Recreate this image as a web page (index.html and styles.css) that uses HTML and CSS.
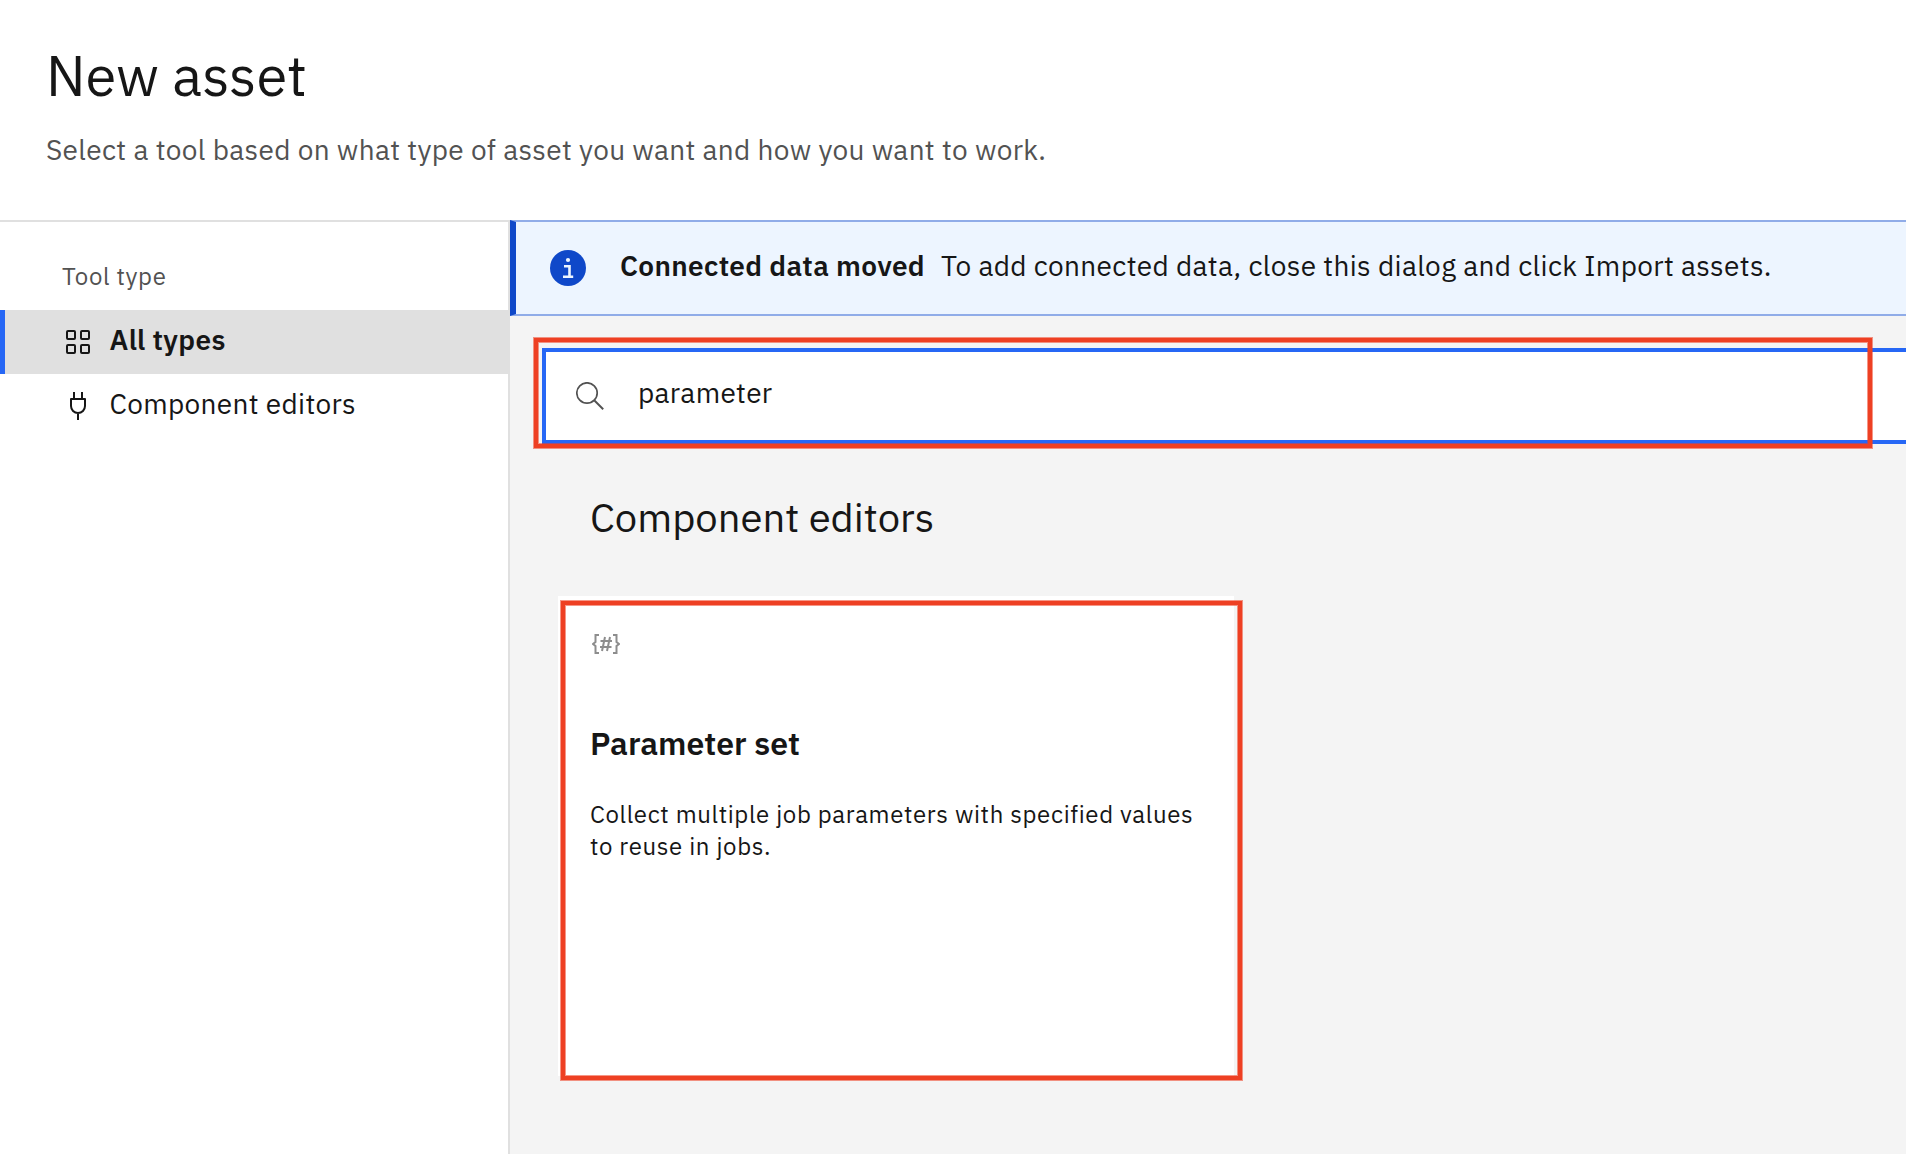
FILE: index.html
```html
<!DOCTYPE html>
<html lang="en">
<head>
<meta charset="utf-8">
<title>New asset</title>
<link rel="stylesheet" href="styles.css">
</head>
<body>
<header class="page-header">
  <h1 class="page-title">New asset</h1>
  <p class="page-subtitle">Select a tool based on what type of asset you want and how you want to work.</p>
</header>
<div class="layout">
  <nav class="sidebar">
    <h2 class="sidebar-label">Tool type</h2>
    <a class="nav-item nav-item-active">
      <svg class="nav-icon" viewBox="0 0 32 32"><g fill="none" stroke="currentColor" stroke-width="2"><rect x="5" y="5" width="8" height="8" rx="1"/><rect x="19" y="5" width="8" height="8" rx="1"/><rect x="5" y="19" width="8" height="8" rx="1"/><rect x="19" y="19" width="8" height="8" rx="1"/></g></svg>
      <span class="nav-strong">All types</span>
    </a>
    <a class="nav-item">
      <svg class="nav-icon" viewBox="0 0 32 32"><path d="M12 2v7M20 2v7M16 23v7M9 9h14v7a7 7 0 0 1-14 0z" fill="none" stroke="currentColor" stroke-width="2" stroke-linejoin="round"/></svg>
      <span>Component editors</span>
    </a>
  </nav>
  <main class="content">
    <div class="notice">
      <svg class="notice-icon" viewBox="0 0 36 36"><circle cx="18" cy="18" r="18" fill="#0f48c9"/><circle cx="18" cy="10" r="2.1" fill="#edf5ff"/><path d="M14 16.2h5.500v10M13 26.700h10.200" fill="none" stroke="#edf5ff" stroke-width="2.600"/></svg>
      <strong class="notice-title">Connected data moved</strong>
      <span>To add connected data, close this dialog and click Import assets.</span>
    </div>
    <div class="search-area">
      <div class="search">
        <svg class="search-icon" viewBox="0 0 28 28"><circle cx="11" cy="11" r="10.200" fill="none" stroke="#525252" stroke-width="1.700"/><path d="M18.200 18.200L27.200 27.200" stroke="#525252" stroke-width="2"/></svg>
        <span>parameter</span>
      </div>
      <div class="highlight highlight-search"></div>
    </div>
    <h2 class="section-title">Component editors</h2>
    <article class="card">
      <svg class="card-icon" viewBox="0 0 28 20"><g fill="none" stroke="#8d8d8d" stroke-width="2"><path d="M7 1H3.500V8L1 10L3.500 12V19H7"/><path d="M21 1H24.500V8L27 10L24.500 12V19H21"/><path d="M8.500 7H20M8 13H19.500M13 3L10 17M18 3L15 17"/></g></svg>
      <h3 class="card-title">Parameter set</h3>
      <p class="card-text">Collect multiple job parameters with specified values to reuse in jobs.</p>
      <div class="highlight highlight-card"></div>
    </article>
  </main>
</div>
</body>
</html>
```
FILE: styles.css
```css
* { box-sizing: border-box; }
body { margin: 0; height: 1154px; overflow: hidden; display: flex; flex-direction: column; background: #fff; color: #161616; font-family: "IBM Plex Sans", Roboto, sans-serif; font-size: 28px; line-height: 36px; letter-spacing: 0.33px; }
h1, h2, h3, p { margin: 0; font-weight: 400; }
.page-header { height: 222px; flex: none; padding: 43px 46px 0; border-bottom: 2px solid #e0e0e0; }
.page-title { font-size: 56px; line-height: 64px; letter-spacing: 0; }
.page-subtitle { margin-top: 25px; color: #525252; }
.layout { flex: 1; display: flex; }
.sidebar { width: 510px; flex: none; border-right: 2px solid #e0e0e0; }
.sidebar-label { padding: 38px 62px 18px; font-size: 24px; line-height: 32px; letter-spacing: 0.64px; color: #525252; }
.nav-item { display: flex; align-items: center; gap: 15.5px; height: 64px; padding: 0 0 4px 62px; }
.nav-item-active { background: #e0e0e0; box-shadow: inset 5px 0 #2667f5; }
.nav-icon { width: 32px; height: 32px; margin-top: 4px; }
.nav-strong { font-weight: 600; }
.content { flex: 1; min-width: 0; background: #f4f4f4; }
.notice { display: flex; height: 96px; margin-top: -2px; padding: 26px 0 0 34px; border: solid #90ace8; border-width: 2px 0; border-left: 6px solid #0f48c9; background: #edf5ff; }
.notice-icon { width: 36px; height: 36px; margin: 2px 34px 0 0; }
.notice-title { font-weight: 600; width: 321px; }
.search-area { position: relative; margin: 32px 0 0 32px; }
.search { display: flex; align-items: center; height: 96px; padding: 0 0 6px 30px; border: 4px solid #2667f5; border-right: 0; background: #fff; }
.search-icon { width: 28px; height: 28px; margin: 6px 34px 0 0; }
.highlight { position: absolute; border: 4px solid #ee4023; box-shadow: 0 0 0 1px rgba(238, 64, 35, 0.55), inset 0 0 0 1px rgba(238, 64, 35, 0.55); }
.highlight-search { left: -8px; top: -10px; width: 1338px; height: 110px; }
.section-title { margin: 49px 0 55px 80px; font-size: 40px; line-height: 48px; letter-spacing: 0; }
.card { position: relative; width: 676px; height: 480px; margin-left: 48px; padding: 38px 32px; background: #fff; }
.card-icon { display: block; width: 28px; height: 20px; margin-left: 2px; }
.card-title { margin-top: 69px; font-size: 32px; line-height: 40px; font-weight: 600; letter-spacing: 0; }
.card-text { margin-top: 35px; font-size: 24px; line-height: 32px; letter-spacing: 0.64px; }
.highlight-card { left: 3px; top: 5px; width: 681px; height: 479px; }
```
